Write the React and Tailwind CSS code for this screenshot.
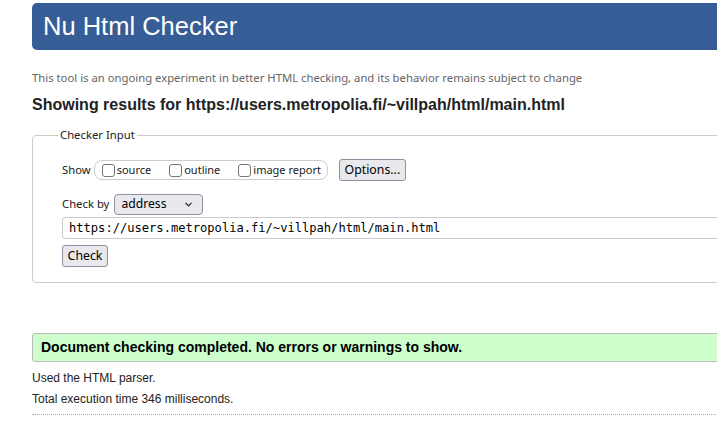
import React from "react";

const segoe = { fontFamily: '"Noto Sans", "Open Sans", sans-serif' };

const Checkbox = ({ label }) => (
	<label className="flex items-center gap-[2px] text-[11px] text-[#222] whitespace-nowrap">
		<span className="inline-block w-[13px] h-[13px] border border-[#767676] rounded-[3px] bg-white" />
		{label}
	</label>
);

const App = () => {
	return (
		<div className="w-[717px] h-[425px] overflow-hidden bg-white font-['Liberation_Sans',Arial,sans-serif]">
			<div className="w-[900px] pl-[32px]">
				<header className="mt-[3px] h-[47px] bg-[#365d95] rounded-[5px] flex items-center pl-[11px]">
					<h1 className="text-[25.5px] leading-none text-white">Nu Html Checker</h1>
				</header>

				<p className="mt-[20px] text-[11.3px] leading-[16px] text-[#666]" style={segoe}>
					This tool is an ongoing experiment in better HTML checking, and its behavior remains subject to change
				</p>
				<h2 className="mt-[9px] text-[16px] leading-[20px] font-bold text-[#222]">
					Showing results for https://users.metropolia.fi/~villpah/html/main.html
				</h2>

				<fieldset className="mt-[12px] border border-[#ccc] rounded-[4px]" style={segoe}>
					<legend className="ml-[25px] px-[2px] text-[11.3px] leading-[16px] text-[#222]">Checker Input</legend>

					<div className="pl-[29px] pb-[15px]">
						<div className="mt-[16px] flex items-center h-[22px]">
							<span className="text-[11.3px] text-[#222]">Show</span>
							<div className="ml-[3px] h-[20px] border border-[#ccc] rounded-[8px] flex items-center pl-[7px] pr-[6px] gap-[18px]">
								<Checkbox label="source" />
								<Checkbox label="outline" />
								<Checkbox label="image report" />
							</div>
							<button className="ml-[11px] h-[22px] w-[67px] bg-[#e9e9ed] border border-[#8f8f9d] rounded-[3px] text-[12.3px] text-black">
								Options...
							</button>
						</div>

						<div className="mt-[13px] flex items-center">
							<span className="text-[11.3px] text-[#222]">Check by</span>
							<div className="ml-[5px] h-[21px] w-[89px] bg-[#e9e9ed] border border-[#8f8f9d] rounded-[4px] flex items-center pl-[6px] pr-[10px] justify-between">
								<span className="text-[12.2px] text-black">address</span>
								<svg width="7" height="5" viewBox="0 0 7 5" fill="none" stroke="#222" strokeWidth="1.2">
									<path d="M0.5 0.8 L3.5 3.8 L6.5 0.8" />
								</svg>
							</div>
						</div>

						<div className="mt-[2px] h-[22px] border border-[#ccc] rounded-[3px] flex items-center pl-[6px]">
							<span className="text-[12.1px] text-black font-['DejaVu_Sans_Mono',monospace]">
								https://users.metropolia.fi/~villpah/html/main.html
							</span>
						</div>

						<button className="mt-[6px] h-[22px] w-[46px] bg-[#e9e9ed] border border-[#8f8f9d] rounded-[3px] text-[12.3px] text-black">
							Check
						</button>
					</div>
				</fieldset>

				<div className="mt-[50px] h-[29px] bg-[#ccffcc] border border-[#bbb] rounded-[3px] flex items-center pl-[8px]">
					<p className="text-[14px] font-bold text-black">Document checking completed. No errors or warnings to show.</p>
				</div>

				<p className="mt-[8px] text-[12px] leading-[16px] text-[#222]">Used the HTML parser.</p>
				<p className="mt-[5px] text-[12px] leading-[16px] text-[#222]">Total execution time 346 milliseconds.</p>
				<div className="mt-[7px] border-t border-dotted border-[#aaa]" />
			</div>
		</div>
	);
};

export default App;
